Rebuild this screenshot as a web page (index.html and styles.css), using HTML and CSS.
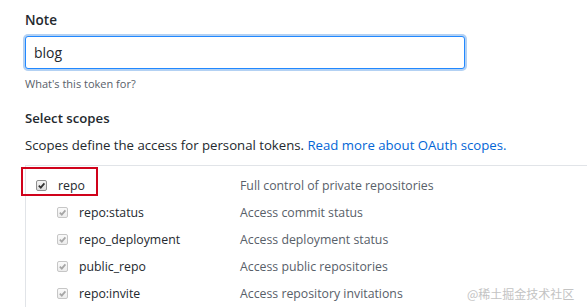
FILE: index.html
```html
<!DOCTYPE html>
<html lang="en">
<head>
  <meta charset="UTF-8" />
  <title>New personal access token</title>
  <link rel="stylesheet" href="styles.css">
</head>
<body>
  <div class="token-form">
    <div class="form-group">
      <label for="note">Note</label>
      <input type="text" id="note" class="form-control" value="blog" />
      <p class="note">What's this token for?</p>
    </div>
    <div class="scopes">
      <h3>Select scopes</h3>
      <p class="scopes-desc">Scopes define the access for personal tokens. <a href="#">Read more about OAuth scopes.</a></p>
      <div class="scope-table">
        <div class="scope-row parent">
          <label class="scope-name highlight">
            <span class="check"><svg viewBox="0 0 10 10"><path d="M2 5.2 L4.2 7.4 L8.2 2.6" /></svg></span>
            repo
          </label>
          <span class="scope-desc">Full control of private repositories</span>
        </div>
        <div class="scope-row child">
          <label class="scope-name">
            <span class="check"><svg viewBox="0 0 10 10"><path d="M2 5.2 L4.2 7.4 L8.2 2.6" /></svg></span>
            repo:status
          </label>
          <span class="scope-desc">Access commit status</span>
        </div>
        <div class="scope-row child">
          <label class="scope-name">
            <span class="check"><svg viewBox="0 0 10 10"><path d="M2 5.2 L4.2 7.4 L8.2 2.6" /></svg></span>
            repo_deployment
          </label>
          <span class="scope-desc">Access deployment status</span>
        </div>
        <div class="scope-row child">
          <label class="scope-name">
            <span class="check"><svg viewBox="0 0 10 10"><path d="M2 5.2 L4.2 7.4 L8.2 2.6" /></svg></span>
            public_repo
          </label>
          <span class="scope-desc">Access public repositories</span>
        </div>
        <div class="scope-row child">
          <label class="scope-name">
            <span class="check"><svg viewBox="0 0 10 10"><path d="M2 5.2 L4.2 7.4 L8.2 2.6" /></svg></span>
            repo:invite
          </label>
          <span class="scope-desc">Access repository invitations</span>
        </div>
      </div>
    </div>
  </div>
  <span class="watermark">@稀土掘金技术社区</span>
</body>
</html>
```

FILE: styles.css
```css
:root {
  --text-color: #24292e;
  --muted-color: #586069;
  --link-color: #0366d6;
  --border-color: #e1e4e8;
  --focus-color: #2188ff;
  --mark-color: #d0021b;
}
*, *::before, *::after { margin: 0; padding: 0; box-sizing: border-box; }
body {
  font-family: 'Open Sans', 'Noto Sans', sans-serif;
  color: var(--text-color);
  background: #fff;
  font-size: 13.2px;
  overflow: hidden;
}
.token-form { padding: 10px 0 0 25px; }
.form-group label { display: block; font-size: 13.5px; line-height: 20px; font-weight: 600; margin-bottom: 6px; }
.form-control {
  display: block;
  width: 440px; height: 33px; padding: 0 8px;
  font-family: inherit; font-size: 14px; color: var(--text-color);
  border: 1px solid var(--focus-color); border-radius: 3px;
  box-shadow: 0 0 0 2px rgba(3,102,214,0.3);
  outline: none;
}
.note { font-size: 11px; line-height: 16px; color: var(--muted-color); margin-top: 7px; }
.scopes h3 { font-size: 13.2px; line-height: 18px; font-weight: 600; margin-top: 17px; }
.scopes-desc { line-height: 18px; margin-top: 9px; }
.scopes-desc a { color: var(--link-color); text-decoration: none; }
.scope-table {
  margin-top: 11px;
  border-top: 1px solid var(--border-color);
  border-left: 1px solid var(--border-color);
  padding-top: 6px;
  font-size: 12.3px;
  line-height: 17px;
}
.scope-row { display: flex; align-items: center; height: 27px; }
.scope-name { display: flex; align-items: center; gap: 11px; width: 214px; }
.scope-row.parent .scope-name { padding-left: 10px; }
.scope-row.child .scope-name { padding-left: 31px; }
.check {
  display: flex; align-items: center; justify-content: center;
  width: 11px; height: 11px;
  border: 1px solid #8f8f8f; border-radius: 2px;
  background: linear-gradient(#f4f4f4, #dcdcdc);
}
.check svg { width: 9px; height: 9px; fill: none; stroke: #333; stroke-width: 1.9; }
.child .check { border-color: #c6c6c6; background: linear-gradient(#fafafa, #ececec); }
.child .check svg { stroke: #a6a6a6; }
.highlight { position: relative; }
.highlight::before {
  content: ''; position: absolute; left: -5px; top: -10px;
  width: 77px; height: 29px;
  border: 2px solid var(--mark-color);
}
.scope-desc { color: var(--muted-color); }
.watermark {
  position: absolute; left: 467px; top: 285px;
  font-size: 12px; color: #c3c3c3;
  font-family: 'Noto Sans CJK SC', sans-serif;
}
```
